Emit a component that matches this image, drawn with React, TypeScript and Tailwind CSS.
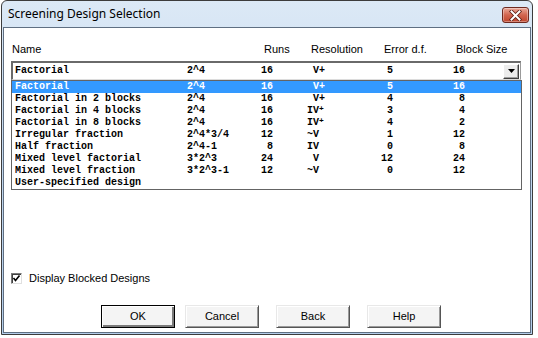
const rows = [
  ["Factorial", "2^4", "16", "   V+", "5", "16"],
  ["Factorial in 2 blocks", "2^4", "16", "   V+", "4", "8"],
  ["Factorial in 4 blocks", "2^4", "16", "  IV^", "3", "4"],
  ["Factorial in 8 blocks", "2^4", "16", "  IV^", "4", "2"],
  ["Irregular fraction", "2^4*3/4", "12", "  ~V", "1", "12"],
  ["Half fraction", "2^4-1", "8", "  IV", "0", "8"],
  ["Mixed level factorial", "3*2^3", "24", "   V", "12", "24"],
  ["Mixed level fraction", "3*2^3-1", "12", "  ~V", "0", "12"],
  ["User-specified design", "", "", "", "", ""],
];

const Resolution = ({ value }: { value: string }) => {
  if (value.endsWith("^")) {
    return (
      <>
        {value.slice(0, -1)}
        <span className="relative -top-[2px] text-[8px] leading-none">+</span>
      </>
    );
  }
  return <>{value}</>;
};

const DesignRow = ({ cells }: { cells: string[] }) => (
  <div className="flex h-[12px] items-center overflow-hidden whitespace-pre leading-[12px]">
    <span className="w-[172px]">{cells[0]}</span>
    <span className="w-[62px]">{cells[1]}</span>
    <span className="w-[24px] text-right">{cells[2]}</span>
    <span className="w-[66px] pl-[22px]">
      <Resolution value={cells[3]} />
    </span>
    <span className="w-[54px] text-right">{cells[4]}</span>
    <span className="w-[72px] text-right">{cells[5]}</span>
  </div>
);

const DialogButton = ({
  label,
  isDefault,
  className,
}: {
  label: string;
  isDefault?: boolean;
  className?: string;
}) => (
  <div
    className={`flex h-[23px] w-[74px] items-center justify-center bg-[#f4f4f4] text-[11px] text-black ${
      isDefault
        ? "border border-black shadow-[inset_1px_1px_0_#ffffff,inset_-2px_-2px_0_#7a7a7a]"
        : "border border-t-[#e8e8e8] border-l-[#e8e8e8] border-r-[#555555] border-b-[#555555] shadow-[inset_1px_1px_0_#ffffff,inset_-1px_-1px_0_#9a9a9a]"
    } ${className ?? ""}`}
  >
    {label}
  </div>
);

export default function App() {
  return (
    <div className="h-[338px] w-[538px] bg-white font-['Liberation_Sans',Arial,sans-serif]">
      <div className="ml-[1px] flex h-[335px] w-[532px] flex-col rounded-t-[6px] border border-[#3c3c3c] bg-gradient-to-b from-[#dce9f6] via-[#c2d7ee] to-[#b3cdea]">
        {/* title bar */}
        <div className="flex h-[26px] shrink-0 items-start">
          <span className="ml-[6px] mt-[5px] font-['Noto_Sans',sans-serif] text-[12px] leading-[16px] text-black">
            Screening Design Selection
          </span>
          <div className="ml-auto mr-[3px] mt-[6px] flex h-[16px] w-[27px] items-center justify-center rounded-[3px] border border-[#6e2a20] bg-gradient-to-b from-[#e9a99a] via-[#d2654f] to-[#c0452c] shadow-[inset_0_0_0_1px_rgba(255,255,255,0.35)]">
            <svg width="13" height="11" viewBox="0 0 13 11">
              <path d="M2.5 1.5 L10.5 9.5 M10.5 1.5 L2.5 9.5" stroke="#5a1d14" strokeWidth="3.6" strokeLinecap="square" />
              <path d="M2.5 1.5 L10.5 9.5 M10.5 1.5 L2.5 9.5" stroke="#ffffff" strokeWidth="2" strokeLinecap="square" />
            </svg>
          </div>
        </div>

        {/* client area */}
        <div className="mx-[1px] mb-[1px] flex flex-1 flex-col border border-[#5f6f82] bg-white pl-[7px]">
          <div className="mt-[14px] flex h-[14px] items-center text-[11px] text-black">
            <span className="w-[253px] pl-[1px]">Name</span>
            <span className="w-[47px]">Runs</span>
            <span className="w-[73px]">Resolution</span>
            <span className="w-[72px]">Error d.f.</span>
            <span>Block Size</span>
          </div>

          <div className="mt-[5px] flex h-[19px] w-[510px] items-center border-b border-l-2 border-r border-t-2 border-b-[#dcdcdc] border-l-[#6a6a6a] border-r-[#9a9a9a] border-t-[#6a6a6a] pl-[2px] font-['Liberation_Mono',monospace] text-[10px] font-bold text-black">
            <div className="flex-1">
              <DesignRow cells={rows[0]} />
            </div>
            <div className="mr-[1px] flex h-[15px] w-[16px] items-center justify-center border border-b-[#404040] border-l-[#ffffff] border-r-[#404040] border-t-[#ffffff] bg-[#ececec] shadow-[inset_-1px_-1px_0_#a0a0a0]">
              <svg width="7" height="4" viewBox="0 0 7 4">
                <path d="M0 0 H7 L3.5 4 Z" fill="#000" />
              </svg>
            </div>
          </div>

          <div className="h-[110px] w-[511px] border border-[#646464] font-['Liberation_Mono',monospace] text-[10px] font-bold text-black">
            {rows.map((r, i) => (
              <div key={i} className={i === 0 ? "bg-[#3399ff] pl-[3px] text-white" : "pl-[3px]"}>
                <DesignRow cells={r} />
              </div>
            ))}
          </div>

          <div className="mt-[82px] flex h-[13px] items-center gap-[7px] text-[11px] text-black">
            <div className="flex h-[11px] w-[11px] items-center justify-center border border-b-[#e0e0e0] border-l-[#7a7a7a] border-r-[#e0e0e0] border-t-[#7a7a7a] bg-white shadow-[inset_1px_1px_0_#404040]">
              <svg width="9" height="9" viewBox="0 0 9 9">
                <path d="M1.5 4 L3.5 6.5 L7.5 1.5" stroke="#000" strokeWidth="1.6" fill="none" />
              </svg>
            </div>
            <span>Display Blocked Designs</span>
          </div>

          <div className="mt-[20px] flex">
            <DialogButton label="OK" isDefault className="ml-[90px]" />
            <DialogButton label="Cancel" className="ml-[10px]" />
            <DialogButton label="Back" className="ml-[17px]" />
            <DialogButton label="Help" className="ml-[17px]" />
          </div>
        </div>
      </div>
    </div>
  );
}
